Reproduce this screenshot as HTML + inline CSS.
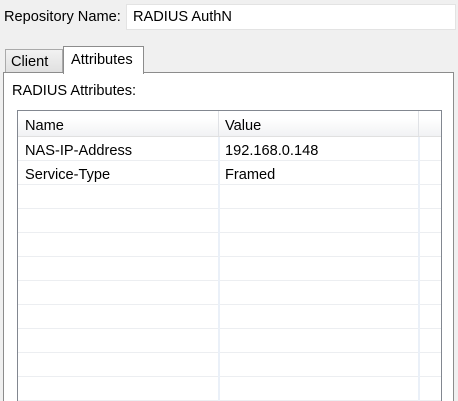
<!DOCTYPE html>
<html><head><style>
html,body{margin:0;width:458px;height:401px;overflow:hidden}
body{background:#f0f0f0;font-family:"Liberation Sans",sans-serif;font-size:14.6px;color:#000;position:relative}
.a{position:absolute}
</style></head><body>
<div class="a" style="left:4px;top:9px">Repository Name:</div>
<div class="a" style="left:126px;top:4px;width:330px;height:26px;background:#fff;border:1px solid #e3e3e3;box-sizing:border-box"></div>
<div class="a" style="left:133px;top:9px">RADIUS AuthN</div>
<div class="a" style="left:5px;top:49px;width:58px;height:24px;background:linear-gradient(#f2f2f2,#e0e0e0);border:1px solid #aaa;box-sizing:border-box"></div>
<div class="a" style="left:11px;top:54px">Client</div>
<div class="a" style="left:3px;top:72px;width:451px;height:329px;background:#fff;border:1px solid #8c8c8c;border-bottom:none;box-sizing:border-box"></div>
<div class="a" style="left:63px;top:46px;width:81px;height:28px;background:#fff;border:1px solid #8c8c8c;border-bottom:none;box-sizing:border-box"></div>
<div class="a" style="left:71px;top:52px">Attributes</div>
<div class="a" style="left:12px;top:83px">RADIUS Attributes:</div>
<div class="a" style="left:17px;top:110px;width:425px;height:291px;border:1px solid #828790;border-bottom:none;box-sizing:border-box;background:#fff"></div>
<div class="a" style="left:18px;top:111px;width:423px;height:25px;background:linear-gradient(#fff 30%,#f1f2f4);border-bottom:1px solid #e0e0e0"></div>
<div class="a" style="left:218px;top:111px;width:1px;height:25px;background:#e0e2e6"></div>
<div class="a" style="left:418px;top:111px;width:1px;height:25px;background:#e0e2e6"></div>
<div class="a" style="left:18px;top:137px;width:423px;height:264px;background:repeating-linear-gradient(#fff 0,#fff 23px,#eceef1 23px,#eceef1 24px)"></div>
<div class="a" style="left:218px;top:137px;width:2px;height:264px;background:#eaf0f8"></div>
<div class="a" style="left:418px;top:137px;width:2px;height:264px;background:#eaf0f8"></div>
<div class="a" style="left:25px;top:118px">Name</div>
<div class="a" style="left:225px;top:118px">Value</div>
<div class="a" style="left:25px;top:143px">NAS-IP-Address</div>
<div class="a" style="left:225px;top:143px">192.168.0.148</div>
<div class="a" style="left:25px;top:167px">Service-Type</div>
<div class="a" style="left:225px;top:167px">Framed</div>
</body></html>
